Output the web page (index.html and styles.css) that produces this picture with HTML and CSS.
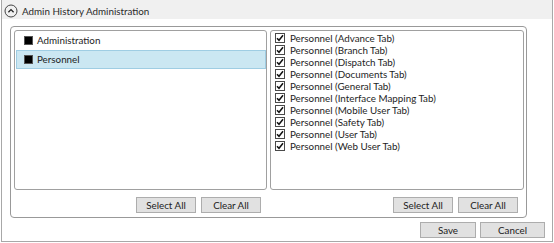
FILE: index.html
```html
<!DOCTYPE html>
<html lang="en">
<head>
    <meta charset="UTF-8">
    <title>Admin History Administration</title>
    <link rel="stylesheet" href="styles.css">
</head>
<body>
    <div class="window">
        <div class="header">
            <svg class="collapse-icon" width="14" height="14" viewBox="0 0 14 14">
                <circle cx="7" cy="7" r="6" fill="none" stroke="#444" stroke-width="1"/>
                <path d="M4.4 8.2 L7 5.6 L9.6 8.2" fill="none" stroke="#222" stroke-width="1.3"/>
            </svg>
            <span class="header_title">Admin History Administration</span>
        </div>
        <div class="group">
            <div class="column">
                <ul class="listbox">
                    <li class="listbox_row listbox_row--module"><span class="check check--partial"></span>Administration</li>
                    <li class="listbox_row listbox_row--module listbox_row--selected"><span class="check check--partial"></span>Personnel</li>
                </ul>
                <div class="button-row">
                    <button class="btn btn--small">Select All</button>
                    <button class="btn btn--small">Clear All</button>
                </div>
            </div>
            <div class="column">
                <ul class="listbox listbox--tabs">
                    <li class="listbox_row"><span class="check check--on"></span>Personnel (Advance Tab)</li>
                    <li class="listbox_row"><span class="check check--on"></span>Personnel (Branch Tab)</li>
                    <li class="listbox_row"><span class="check check--on"></span>Personnel (Dispatch Tab)</li>
                    <li class="listbox_row"><span class="check check--on"></span>Personnel (Documents Tab)</li>
                    <li class="listbox_row"><span class="check check--on"></span>Personnel (General Tab)</li>
                    <li class="listbox_row"><span class="check check--on"></span>Personnel (Interface Mapping Tab)</li>
                    <li class="listbox_row"><span class="check check--on"></span>Personnel (Mobile User Tab)</li>
                    <li class="listbox_row"><span class="check check--on"></span>Personnel (Safety Tab)</li>
                    <li class="listbox_row"><span class="check check--on"></span>Personnel (User Tab)</li>
                    <li class="listbox_row"><span class="check check--on"></span>Personnel (Web User Tab)</li>
                </ul>
                <div class="button-row">
                    <button class="btn btn--small">Select All</button>
                    <button class="btn btn--small">Clear All</button>
                </div>
            </div>
        </div>
        <div class="footer">
            <button class="btn btn--save">Save</button>
            <button class="btn btn--cancel">Cancel</button>
        </div>
    </div>
</body>
</html>
```

FILE: styles.css
```css
body {
    margin: 0;
    background: #fff;
    font-family: Lato, "Open Sans", sans-serif;
    font-size: 9.8px;
    color: #1e1e1e;
}
.window {
    margin-left: 1px;
    width: 552px;
    height: 242px;
    box-sizing: border-box;
    border: 1px solid #a8a8a8;
    border-top: none;
    display: flex;
    flex-direction: column;
}
.header {
    height: 19px;
    background-color: #f0f0f0;
    display: flex;
    align-items: center;
    padding-left: 2px;
    flex-shrink: 0;
}
.collapse-icon {
    margin-top: 2px;
}
.header_title {
    margin-left: 4px;
    margin-top: 2px;
    font-size: 9.8px;
    color: #2a2a2a;
}
.group {
    margin: 7px 25px 0 8px;
    height: 192px;
    box-sizing: border-box;
    border: 1px solid #999;
    border-radius: 4px;
    padding: 3px 2px 0 3px;
    display: grid;
    grid-template-columns: 253px 254px;
    column-gap: 3px;
}
.column {
    display: flex;
    flex-direction: column;
}
.listbox {
    list-style: none;
    margin: 0;
    padding: 0;
    height: 160px;
    box-sizing: border-box;
    border: 1px solid #a0a0a0;
    border-radius: 3px;
}
.listbox--tabs {
    padding: 1px 0 0 4px;
}
.listbox_row {
    height: 12px;
    display: flex;
    align-items: center;
    white-space: nowrap;
    line-height: 11px;
}
.listbox_row--module {
    height: 19px;
    margin: 0 0 0 1px;
    padding-left: 7px;
    box-sizing: border-box;
    border: 1px solid transparent;
}
.listbox_row--selected {
    background-color: #cbe7f2;
    border-color: #9fcde3;
}
.check {
    box-sizing: border-box;
    flex-shrink: 0;
    margin-right: 5px;
}
.check--partial {
    width: 9px;
    height: 9px;
    background-color: #000;
    border: 1px solid #555;
    margin-right: 4px;
}
.check--on {
    width: 10px;
    height: 10px;
    border: 1px solid #4a4a4a;
    background: #fff url("data:image/svg+xml;utf8,<svg xmlns='http://www.w3.org/2000/svg' width='8' height='8' viewBox='0 0 8 8'><path d='M1 4.2 L3 6.3 L7 1.2' fill='none' stroke='%23111' stroke-width='1.5'/></svg>") no-repeat center;
}
.button-row {
    display: flex;
    justify-content: flex-end;
    gap: 5px;
    margin-top: 7px;
    padding-right: 6px;
}
.btn {
    font-family: inherit;
    font-size: 9.8px;
    color: #222;
    height: 16px;
    padding: 0;
    line-height: 14px;
    background-color: #e1e1e1;
    border: 1px solid #adadad;
    border-radius: 0;
}
.btn--small {
    width: 60px;
}
.footer {
    display: flex;
    justify-content: flex-end;
    gap: 4px;
    margin-top: 4px;
    padding-right: 7px;
}
.btn--save {
    width: 56px;
}
.btn--cancel {
    width: 65px;
}
```
